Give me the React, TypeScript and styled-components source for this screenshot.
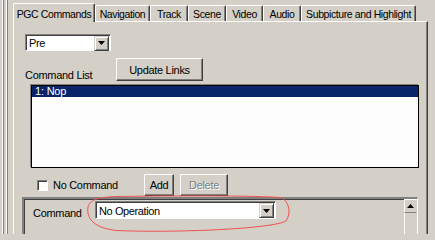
import styled, { createGlobalStyle } from "styled-components";

const GlobalStyle = createGlobalStyle`
  html, body {
    margin: 0;
    padding: 0;
    background: #d4d0c8;
  }
  body {
    font-family: "Liberation Sans", Arial, sans-serif;
    font-size: 11px;
    color: #000;
  }
`;

const Root = styled.div`
  position: relative;
  width: 435px;
  height: 234px;
  display: flex;
  overflow: hidden;
  background: #d4d0c8;
`;

// splitter lines at the far left
const LeftEdge = styled.div`
  width: 13px;
  flex: none;
  background: linear-gradient(
    to right,
    transparent 2px,
    #fff 2px 3px,
    #808080 3px 4px,
    transparent 4px 6px,
    #fff 6px 7px,
    #808080 7px 8px,
    transparent 8px
  );
`;

const TabArea = styled.div`
  width: 415px;
  flex: none;
  display: flex;
  flex-direction: column;
`;

const TabStrip = styled.div`
  height: 22px;
  flex: none;
  display: flex;
  align-items: flex-end;
  position: relative;
  z-index: 1;
`;

const Tab = styled.div<{ $w: number; $active?: boolean }>`
  box-sizing: border-box;
  width: ${(p) => p.$w}px;
  height: ${(p) => (p.$active ? 19 : 16)}px;
  margin-bottom: ${(p) => (p.$active ? 0 : 1)}px;
  padding-top: ${(p) => (p.$active ? 2 : 0)}px;
  background: #d4d0c8;
  border-top: 1px solid #fff;
  border-left: 1px solid #fff;
  border-right: 1px solid #404040;
  border-top-left-radius: 2px;
  border-top-right-radius: 2px;
  box-shadow: inset -1px 0 #808080;
  display: flex;
  align-items: center;
  justify-content: center;
  white-space: nowrap;
  font-size: 10.5px;
  letter-spacing: -0.4px;
`;

const Panel = styled.div`
  flex: 1;
  margin-top: -1px;
  border-top: 1px solid #fff;
  border-left: 1px solid #fff;
  border-right: 1px solid #404040;
  box-shadow: inset -1px 0 #808080;
  padding: 12px 0 0 8px;
  display: flex;
  flex-direction: column;
`;

const Upper = styled.div`
  padding-left: 3px;
  display: flex;
  flex-direction: column;
`;

const Combo = styled.div<{ $w: number; $h: number }>`
  box-sizing: border-box;
  width: ${(p) => p.$w}px;
  height: ${(p) => p.$h}px;
  background: #fff;
  border: 1px solid;
  border-color: #808080 #fff #fff #808080;
  box-shadow: inset 1px 1px #404040;
  display: flex;
  align-items: center;
  padding: 1px 1px 0 1px;
`;

const ComboText = styled.span`
  flex: 1;
  padding-left: 2px;
  letter-spacing: -0.4px;
`;

const ComboButton = styled.div<{ $s: number }>`
  box-sizing: border-box;
  width: ${(p) => p.$s}px;
  height: ${(p) => p.$s}px;
  background: #d4d0c8;
  border: 1px solid;
  border-color: #d4d0c8 #404040 #404040 #d4d0c8;
  box-shadow: inset 1px 1px #fff, inset -1px -1px #808080;
  display: flex;
  align-items: center;
  justify-content: center;
`;

const LabelRow = styled.div`
  margin-top: 7px;
  height: 23px;
  display: flex;
  align-items: flex-end;
`;

const FieldLabel = styled.span<{ $w: number }>`
  width: ${(p) => p.$w}px;
  flex: none;
  letter-spacing: -0.3px;
  line-height: 12px;
`;

const Button = styled.button<{ $w: number; $h: number; $disabled?: boolean }>`
  box-sizing: border-box;
  width: ${(p) => p.$w}px;
  height: ${(p) => p.$h}px;
  flex: none;
  padding: 0;
  margin: 0;
  font: inherit;
  letter-spacing: -0.3px;
  background: #d4d0c8;
  border: 1px solid;
  border-color: #fff #404040 #404040 #fff;
  box-shadow: inset -1px -1px #808080;
  color: ${(p) => (p.$disabled ? "#808080" : "#000")};
  text-shadow: ${(p) => (p.$disabled ? "1px 1px 0 #fff" : "none")};
`;

const ListBox = styled.div`
  box-sizing: border-box;
  margin: 4px 0 0 6px;
  width: 388px;
  height: 83px;
  background: #fcfdfc;
  border: 1px solid #000;
  box-shadow: -1px -1px 0 #808080;
  display: flex;
  flex-direction: column;
`;

const ListItem = styled.div<{ $selected?: boolean }>`
  height: 11px;
  line-height: 11px;
  padding-left: 3px;
  background: ${(p) => (p.$selected ? "#0a246a" : "transparent")};
  color: ${(p) => (p.$selected ? "#fff" : "#000")};
  letter-spacing: -0.2px;
`;

const ActionRow = styled.div`
  margin-top: 6px;
  height: 22px;
  display: flex;
  align-items: center;
  gap: 6px;
`;

const CheckLabel = styled.label`
  width: 101px;
  flex: none;
  margin-left: 12px;
  display: flex;
  align-items: center;
  gap: 5px;
  letter-spacing: -0.3px;
`;

const CheckBox = styled.span`
  box-sizing: border-box;
  width: 11px;
  height: 11px;
  flex: none;
  background: #fff;
  border: 1px solid;
  border-color: #808080 #fff #fff #808080;
  box-shadow: inset 1px 1px #404040;
`;

const Group = styled.div`
  box-sizing: border-box;
  margin-top: 1px;
  width: 396px;
  flex: 1;
  border-top: 2px solid #808080;
  border-left: 2px solid #808080;
  border-right: 1px solid #fff;
  box-shadow: inset 1px 1px #404040;
  display: flex;
`;

const GroupBody = styled.div`
  flex: 1;
  padding: 2px 0 0 9px;
`;

const CommandRow = styled.div`
  display: flex;
  align-items: center;
`;

const CommandLabel = styled.span`
  width: 62px;
  flex: none;
  padding-top: 5px;
  letter-spacing: -0.3px;
`;

const ScrollBar = styled.div`
  width: 13px;
  flex: none;
  display: flex;
  flex-direction: column;
`;

const ScrollButton = styled.div`
  box-sizing: border-box;
  height: 14px;
  border: 1px solid;
  border-color: #fff #d4d0c8 #808080 #fff;
  display: flex;
  align-items: center;
  justify-content: center;
`;

const ScrollTrack = styled.div`
  flex: 1;
  border-left: 1px solid #fff;
  background: #d4d0c8;
`;

// the hand-drawn red mark over the command box
const Annotation = styled.svg`
  position: absolute;
  left: 0;
  top: 0;
  pointer-events: none;
`;

const Arrow = ({ up }: { up?: boolean }) => (
  <svg width="7" height="4" viewBox="0 0 7 4">
    <polygon points={up ? "3.5,0 7,4 0,4" : "0,0 7,0 3.5,4"} fill="#000" />
  </svg>
);

const tabs = [
  { label: "PGC Commands", w: 82, active: true },
  { label: "Navigation", w: 55 },
  { label: "Track", w: 38 },
  { label: "Scene", w: 38 },
  { label: "Video", w: 37 },
  { label: "Audio", w: 38 },
  { label: "Subpicture and Highlight", w: 115 },
];

export default function App() {
  return (
    <Root>
      <GlobalStyle />
      <LeftEdge />
      <TabArea>
        <TabStrip>
          {tabs.map((t) => (
            <Tab key={t.label} $w={t.w} $active={t.active}>
              {t.label}
            </Tab>
          ))}
        </TabStrip>
        <Panel>
          <Upper>
            <Combo $w={86} $h={17}>
              <ComboText>Pre</ComboText>
              <ComboButton $s={15}>
                <Arrow />
              </ComboButton>
            </Combo>

            <LabelRow>
              <FieldLabel $w={91}>Command List</FieldLabel>
              <Button $w={87} $h={23}>
                Update Links
              </Button>
            </LabelRow>

            <ListBox>
              <ListItem $selected>1: Nop</ListItem>
            </ListBox>

            <ActionRow>
              <CheckLabel>
                <CheckBox />
                No Command
              </CheckLabel>
              <Button $w={30} $h={22}>
                Add
              </Button>
              <Button $w={48} $h={22} $disabled>
                Delete
              </Button>
            </ActionRow>
          </Upper>

          <Group>
            <GroupBody>
              <CommandRow>
                <CommandLabel>Command</CommandLabel>
                <Combo $w={181} $h={18}>
                  <ComboText>No Operation</ComboText>
                  <ComboButton $s={15}>
                    <Arrow />
                  </ComboButton>
                </Combo>
              </CommandRow>
            </GroupBody>
            <ScrollBar>
              <ScrollButton>
                <Arrow up />
              </ScrollButton>
              <ScrollTrack />
            </ScrollBar>
          </Group>
        </Panel>
      </TabArea>

      <Annotation width="435" height="234" viewBox="0 0 435 234">
        <path
          d="M118 196.5 C150 196 240 195 281 197.5 C290 202 291 214 286 221 C272 229 175 233 116 230.5 C96 228 86 220 88 207 C90 199 100 197 118 196.5"
          fill="none"
          stroke="#f05050"
          strokeWidth="1"
        />
      </Annotation>
    </Root>
  );
}
